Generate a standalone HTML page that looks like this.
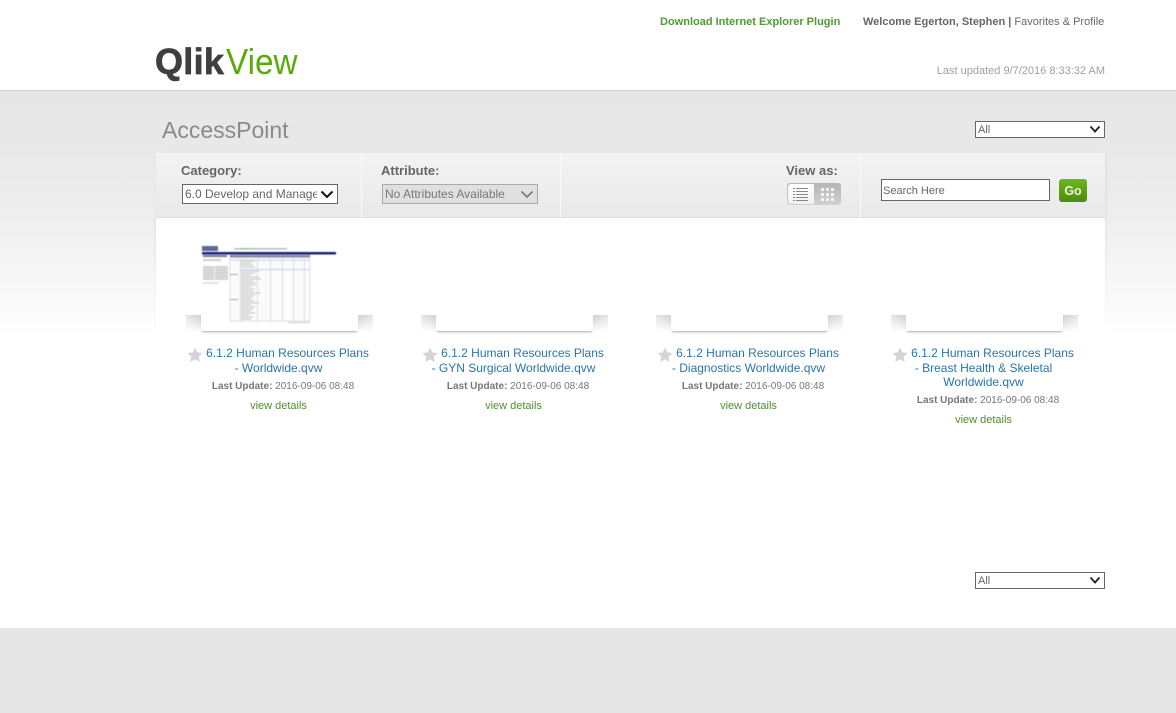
<!DOCTYPE html>
<html><head><meta charset="utf-8">
<style>
html,body{margin:0;padding:0}
body{width:1176px;height:713px;position:relative;overflow:hidden;background:#fff;font-family:"Liberation Sans",sans-serif;color:#666}
.a{position:absolute;white-space:nowrap}
.sel{position:absolute;box-sizing:border-box;border:1px solid #666;background:#fff;font-size:11px;color:#666;line-height:14px;padding-left:2px;overflow:hidden;white-space:nowrap}
.sel svg{position:absolute;right:3px}
.title{position:absolute;width:190px;text-align:center;font-size:12px;line-height:14.5px;color:#2a75ad}
.title div{padding-left:18px}
.upd{position:absolute;width:190px;text-align:center;font-size:10px;color:#777}
.det{position:absolute;width:190px;text-align:center;font-size:11px;color:#4f8f2f}
.sh{position:absolute;top:315px;width:187px;height:17px}
.sh b{position:absolute;top:0;width:15px;height:17px}
.sh b.l{left:0;background:linear-gradient(rgba(255,255,255,0),#fff),linear-gradient(90deg,#e6e6e6,#cfcfcf)}
.sh b.r{right:0;background:linear-gradient(rgba(255,255,255,0),#fff),linear-gradient(90deg,#cfcfcf,#e6e6e6)}
.sh i{position:absolute;left:15px;right:15px;top:-1px;height:17px;background:#fff;box-shadow:0 2px 2px -1px #aaa}
.lab{position:absolute;font-size:13px;font-weight:bold;color:#666}
</style></head>
<body>
<div class="a" style="left:0;top:90px;width:1176px;height:1px;background:#cfcfcf"></div>
<div class="a" style="left:0;top:91px;width:1176px;height:245px;background:linear-gradient(#e6e6e6 0,#ebebeb 40%,#f5f5f5 72%,#fff 100%)"></div>
<div class="a" style="left:0;top:628px;width:1176px;height:85px;background:#e6e6e6"></div>

<div class="a" style="left:660px;top:16px;font-size:11px;font-weight:bold;color:#4f9a32">Download Internet Explorer Plugin</div>
<div class="a" style="left:863px;top:16px;font-size:11px;color:#666"><b>Welcome Egerton, Stephen |</b> Favorites &amp; Profile</div>
<div class="a" style="right:71px;top:65px;font-size:11px;color:#a0a0a0">Last updated 9/7/2016 8:33:32 AM</div>

<div class="a" style="left:155px;top:41px;font-size:36px;line-height:41px;font-weight:bold;color:#3f3f3f;letter-spacing:.3px;-webkit-text-stroke:.7px #3f3f3f">Qlik</div>
<div class="a" style="left:226px;top:41px;font-size:36px;line-height:41px;color:#5aaa0a;transform:scaleX(.925);transform-origin:0 0">View</div>

<div class="a" style="left:162px;top:117px;font-size:23px;line-height:27px;color:#8a8a8a">AccessPoint</div>

<div class="sel" style="left:975px;top:121px;width:130px;height:17px;line-height:16px">All<svg style="top:3px" width="12" height="9" viewBox="0 0 12 9"><path d="M1.500 1.500 6 6.500l4.500-5" fill="none" stroke="#222" stroke-width="1.800"/></svg></div>

<!-- main panel -->
<div class="a" style="left:156px;top:153px;width:949px;height:180px;background:#fff"></div>
<div class="a" style="left:1105px;top:218px;width:3px;height:115px;-webkit-mask-image:linear-gradient(#000,transparent);background:linear-gradient(90deg,rgba(0,0,0,.05),rgba(0,0,0,0))"></div>
<div class="a" style="left:153px;top:218px;width:3px;height:115px;-webkit-mask-image:linear-gradient(#000,transparent);background:linear-gradient(270deg,rgba(0,0,0,.05),rgba(0,0,0,0))"></div>
<div class="a" style="left:156px;top:153px;width:949px;height:64px;background:linear-gradient(#f3f3f3,#e9e9e9);border-radius:4px 4px 0 0;border-bottom:1px solid #e0e0e0;box-shadow:1px 0 3px rgba(0,0,0,.06)"></div>
<div class="a" style="left:361px;top:153px;width:1px;height:64px;background:#fafafa"></div>
<div class="a" style="left:560px;top:153px;width:1px;height:64px;background:#fafafa"></div>
<div class="a" style="left:860px;top:153px;width:1px;height:64px;background:#fafafa"></div>

<div class="lab" style="left:181px;top:163px">Category:</div>
<div class="sel" style="left:182px;top:184px;width:156px;height:20px;font-size:12px;line-height:18px;color:#666">6.0 Develop and Manage<span style="position:absolute;right:0;top:0;width:20px;height:18px;background:#fff"></span><svg style="top:5px" width="14" height="9" viewBox="0 0 14 9"><path d="M1.500 1.500 7 7l5.500-5.500" fill="none" stroke="#111" stroke-width="2"/></svg></div>

<div class="lab" style="left:381px;top:163px">Attribute:</div>
<div class="sel" style="left:382px;top:184px;width:156px;height:20px;font-size:12px;line-height:18px;color:#777;background:#e0e0e0;border-color:#aaa">No Attributes Available<svg style="top:5px" width="14" height="9" viewBox="0 0 14 9"><path d="M1.500 1.500 7 7l5.500-5.500" fill="none" stroke="#777" stroke-width="1.600"/></svg></div>

<div class="lab" style="left:786px;top:163px">View as:</div>
<div class="a" style="left:787px;top:183px;width:54px;height:22px;border-radius:3px;background:linear-gradient(#b6b6b6,#d0d0d0)"></div>
<div class="a" style="left:788px;top:184px;width:26px;height:20px;border-radius:3px 0 0 3px;background:linear-gradient(#fff,#f0f0f0)"></div>
<svg class="a" style="left:793px;top:187px" width="15" height="15" viewBox="0 0 15 15"><path d="M0 1.500h2M3 1.500h12M0 4.500h2M3 4.500h12M0 7.500h2M3 7.500h12M0 10.500h2M3 10.500h12M0 13.500h2M3 13.500h12" stroke="#888" stroke-width="1"/></svg>
<svg class="a" style="left:821px;top:188px" width="13" height="13" viewBox="0 0 13 13" fill="#f4f4f4"><rect width="3" height="3"/><rect x="5" width="3" height="3"/><rect x="10" width="3" height="3"/><rect y="5" width="3" height="3"/><rect x="5" y="5" width="3" height="3"/><rect x="10" y="5" width="3" height="3"/><rect y="10" width="3" height="3"/><rect x="5" y="10" width="3" height="3"/><rect x="10" y="10" width="3" height="3"/></svg>

<div class="sel" style="left:881px;top:179px;width:169px;height:22px;padding-left:1px;line-height:22px;font-size:11px">Search Here</div>
<div class="a" style="left:1059px;top:179px;width:28px;height:23px;border-radius:3px;background:linear-gradient(#6fb51d,#4c8c10);color:#e8f3d8;font-size:12.5px;font-weight:bold;text-align:center;line-height:24px">Go</div>

<!-- shelves -->
<div class="sh" style="left:186px"><b class="l"></b><b class="r"></b><i></i></div>
<div class="sh" style="left:421px"><b class="l"></b><b class="r"></b><i></i></div>
<div class="sh" style="left:656px"><b class="l"></b><b class="r"></b><i></i></div>
<div class="sh" style="left:891px"><b class="l"></b><b class="r"></b><i></i></div>

<!-- thumbnail -->
<svg class="a" style="left:200px;top:243px;filter:blur(.6px)" width="137" height="82" viewBox="0 0 137 82">
<rect x="2" y="3" width="16" height="5" fill="#5a6a9a"/>
<rect x="34" y="5" width="53" height="1.500" fill="#bbb"/><rect x="40" y="5" width="10" height="1.500" fill="#8cc87a"/>
<rect x="2" y="9" width="134" height="2.500" fill="#1f1f7a"/>
<rect x="3" y="12" width="24" height="2" fill="#778"/><rect x="3" y="16" width="18" height="2" fill="#ccc"/>
<rect x="3" y="23" width="25" height="14" fill="#d2d2d2"/><rect x="14" y="23" width="1" height="14" fill="#f4f4f4"/>
<path d="M3 25.500h25M3 28.500h25M3 31.500h25M3 34.500h25" stroke="#eee" stroke-width=".6"/>
<rect x="3" y="39" width="16" height="2" fill="#e2e2e2"/>
<rect x="30" y="12" width="80" height="66" fill="#fbfbfb" stroke="#c8c8d0" stroke-width=".6"/>
<rect x="30" y="12" width="80" height="2.500" fill="#889"/>
<rect x="30" y="16" width="80" height="2" fill="#d8e6f4"/>
<rect x="41" y="26" width="69" height="1" fill="#bcd3ec"/>
<path d="M41 18h14M41 20h10M41 22h12M41 24h14M41 28h18M41 30h14M41 32h10M41 34h18M41 36h20M41 38h12M41 40h16M41 42h14M41 44h10M41 46h14M41 48h12M41 50h20M41 52h14M41 54h12M41 56h10M41 58h14M41 60h18M41 62h10M41 64h14M41 66h12M41 68h10M41 70h14M41 72h8M41 74h12M41 76h10" stroke="#c4c4c4" stroke-width=".9"/>
<path d="M40.500 15v63M57.500 15v63M70.500 15v63M82.500 15v63M93.500 15v63M104.500 15v63" stroke="#d0d0d8" stroke-width=".7"/>
<rect x="30" y="31" width="8" height="1" fill="#aaa"/><rect x="30" y="56" width="8" height="1" fill="#aaa"/>
<rect x="88" y="79" width="22" height="1" fill="#ccc"/>
</svg>

<!-- items -->
<svg class="a" style="left:187px;top:347px" width="16" height="15" viewBox="0 0 16 15"><path d="M8 .5l2.300 4.900 5.200.7-3.800 3.600 1 5.300L8 12.400l-4.700 2.600 1-5.300L.5 6.100l5.200-.7z" fill="#d4d4d8"/></svg>
<div class="title" style="left:183.500px;top:346px"><div>6.1.2 Human Resources Plans</div>- Worldwide.qvw</div>
<div class="upd" style="left:188px;top:381px"><b>Last Update:</b> 2016-09-06 08:48</div>
<div class="det" style="left:183.500px;top:400px">view details</div>

<svg class="a" style="left:422px;top:347px" width="16" height="15" viewBox="0 0 16 15"><path d="M8 .5l2.300 4.900 5.200.7-3.800 3.600 1 5.300L8 12.400l-4.700 2.600 1-5.300L.5 6.100l5.200-.7z" fill="#d4d4d8"/></svg>
<div class="title" style="left:418.500px;top:346px"><div>6.1.2 Human Resources Plans</div>- GYN Surgical Worldwide.qvw</div>
<div class="upd" style="left:423px;top:381px"><b>Last Update:</b> 2016-09-06 08:48</div>
<div class="det" style="left:418.500px;top:400px">view details</div>

<svg class="a" style="left:657px;top:347px" width="16" height="15" viewBox="0 0 16 15"><path d="M8 .5l2.300 4.900 5.200.7-3.800 3.600 1 5.300L8 12.400l-4.700 2.600 1-5.300L.5 6.100l5.200-.7z" fill="#d4d4d8"/></svg>
<div class="title" style="left:653.500px;top:346px"><div>6.1.2 Human Resources Plans</div>- Diagnostics Worldwide.qvw</div>
<div class="upd" style="left:658px;top:381px"><b>Last Update:</b> 2016-09-06 08:48</div>
<div class="det" style="left:653.500px;top:400px">view details</div>

<svg class="a" style="left:892px;top:347px" width="16" height="15" viewBox="0 0 16 15"><path d="M8 .5l2.300 4.900 5.200.7-3.800 3.600 1 5.300L8 12.400l-4.700 2.600 1-5.300L.5 6.100l5.200-.7z" fill="#d4d4d8"/></svg>
<div class="title" style="left:888.500px;top:346px"><div>6.1.2 Human Resources Plans</div>- Breast Health &amp; Skeletal<br>Worldwide.qvw</div>
<div class="upd" style="left:893px;top:395px"><b>Last Update:</b> 2016-09-06 08:48</div>
<div class="det" style="left:888.500px;top:414px">view details</div>

<div class="sel" style="left:975px;top:572px;width:130px;height:17px;line-height:16px">All<svg style="top:3px" width="12" height="9" viewBox="0 0 12 9"><path d="M1.500 1.500 6 6.500l4.500-5" fill="none" stroke="#222" stroke-width="1.800"/></svg></div>
</body></html>
